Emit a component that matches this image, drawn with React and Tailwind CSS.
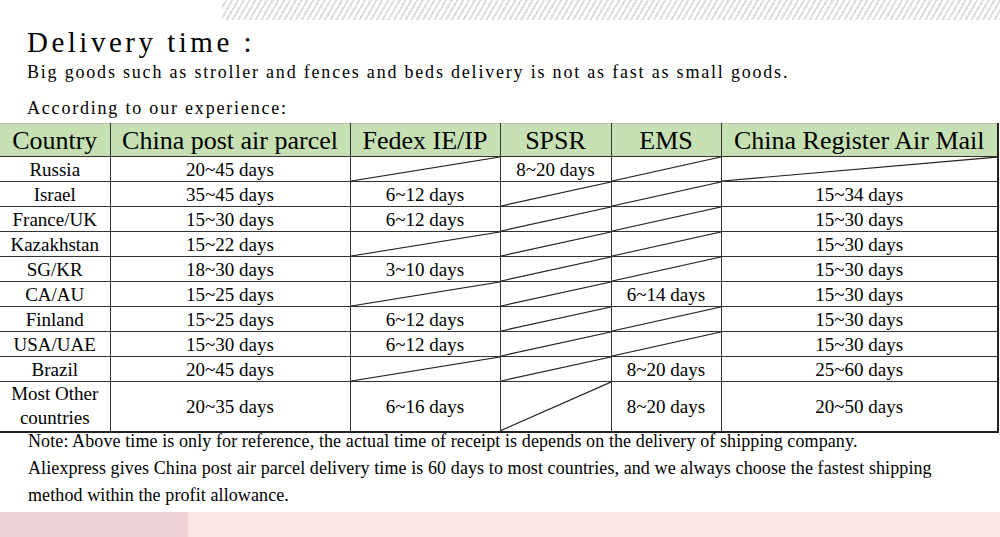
const rows = [
  ['Russia', '20~45 days', null, '8~20 days', null, null],
  ['Israel', '35~45 days', '6~12 days', null, null, '15~34 days'],
  ['France/UK', '15~30 days', '6~12 days', null, null, '15~30 days'],
  ['Kazakhstan', '15~22 days', null, null, null, '15~30 days'],
  ['SG/KR', '18~30 days', '3~10 days', null, null, '15~30 days'],
  ['CA/AU', '15~25 days', null, null, '6~14 days', '15~30 days'],
  ['Finland', '15~25 days', '6~12 days', null, null, '15~30 days'],
  ['USA/UAE', '15~30 days', '6~12 days', null, null, '15~30 days'],
  ['Brazil', '20~45 days', null, null, '8~20 days', '25~60 days'],
];

const headers = ['Country', 'China post air parcel', 'Fedex IE/IP', 'SPSR', 'EMS', 'China Register Air Mail'];
const widths = ['w-[110px]', 'w-[240px]', 'w-[150px]', 'w-[111px]', 'w-[110px]', 'w-[277px]'];

const Slash = () => (
  <svg className="absolute inset-0 w-full h-full" viewBox="0 0 100 100" preserveAspectRatio="none">
    <line x1="0" y1="100" x2="100" y2="0" stroke="#222" strokeWidth="1.2" vectorEffect="non-scaling-stroke" />
  </svg>
);

const Cell = ({ value, first }) => (
  <td className={`relative p-0 text-center border border-[#333] ${first ? 'border-l-0' : ''}`}>
    {value === null ? <Slash /> : value}
  </td>
);

const App = () => {
  return (
    <div className="relative w-[1000px] h-[537px] bg-white overflow-hidden text-black font-['Liberation_Serif','Times_New_Roman',serif]">
      <div className="h-[20px] ml-[222px] bg-[repeating-linear-gradient(120deg,#ffffff_0px,#ffffff_3px,#dedede_3px,#dedede_5px)]" />

      <div className="pl-[27px]">
        <h1 className="text-[29px] leading-[34px] tracking-[3.5px] mt-[5px]">Delivery time :</h1>
        <p className="text-[18px] leading-[22px] tracking-[1.8px] mt-[2px]">
          Big goods such as stroller and fences and beds delivery is not as fast as small goods.
        </p>
        <p className="text-[18px] leading-[22px] tracking-[1.8px] mt-[14px]">According to our experience:</p>
      </div>

      <table className="table-fixed border-collapse w-[998px] mt-[4px] border-r-2 border-b-2 border-[#222]">
        <colgroup>
          {widths.map((w, i) => <col key={i} className={w} />)}
        </colgroup>
        <thead>
          <tr className="h-[33px] bg-[#c6e0b4]">
            {headers.map((h, i) => (
              <th key={h} className={`p-0 pt-[2px] font-normal text-[26px] leading-none whitespace-nowrap border border-[#333] border-t-[#bbb] ${i === 0 ? 'border-l-0' : ''}`}>
                {h}
              </th>
            ))}
          </tr>
        </thead>
        <tbody className="text-[19px] leading-none">
          {rows.map((r) => (
            <tr key={r[0]} className="h-[25px]">
              {r.map((v, i) => <Cell key={i} value={v} first={i === 0} />)}
            </tr>
          ))}
          <tr className="h-[50px]">
            <td className="p-0 text-center border border-[#333] border-l-0 leading-[24px]">Most Other<br />countries</td>
            <Cell value="20~35 days" />
            <Cell value="6~16 days" />
            <Cell value={null} />
            <Cell value="8~20 days" />
            <Cell value="20~50 days" />
          </tr>
        </tbody>
      </table>

      <div className="pl-[28px] text-[18px] leading-[27px] tracking-[0.1px] mt-[-5px]">
        <p>Note: Above time is only for reference, the actual time of receipt is depends on the delivery of shipping company.</p>
        <p>Aliexpress gives China post air parcel delivery time is 60 days to most countries, and we always choose the fastest shipping</p>
        <p>method within the profit allowance.</p>
      </div>

      <div className="absolute left-0 bottom-0 w-full h-[25px] flex">
        <div className="w-[188px] bg-[#efd2d5]" />
        <div className="flex-1 bg-[#fbe5e5]" />
      </div>
    </div>
  );
};

export default App;
